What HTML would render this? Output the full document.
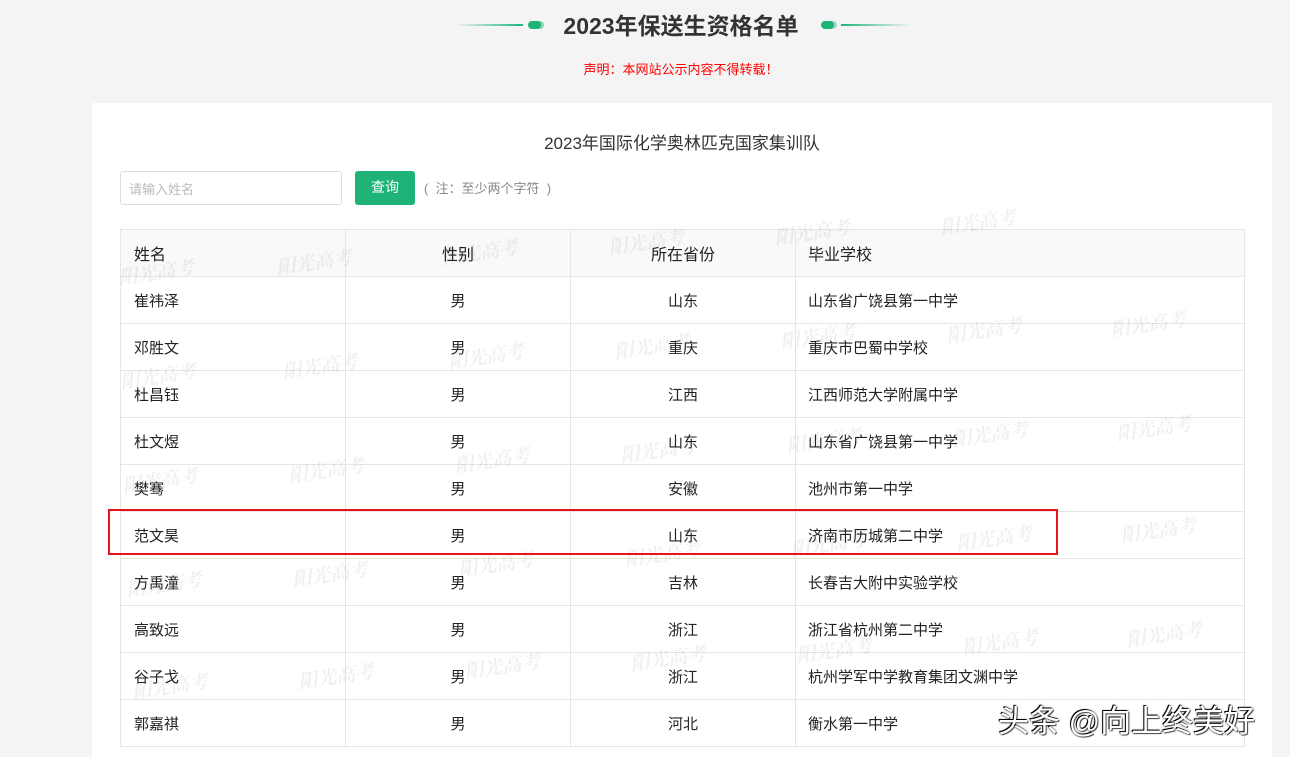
<!DOCTYPE html>
<html><head><meta charset="utf-8"><style>
*{margin:0;padding:0;box-sizing:border-box}
html,body{width:1290px;height:757px;overflow:hidden}
body{background:#f4f4f4;font-family:"Liberation Sans","Noto Sans CJK SC",sans-serif;position:relative;color:#222}
.abs{position:absolute}
.panel{position:absolute;left:92px;top:103px;width:1180px;height:654px;background:#fff}
table{position:absolute;left:120px;top:229px;border-collapse:collapse;font-size:15px;table-layout:fixed}
td,th{border:1px solid #e6e6e6;height:47px;font-weight:normal;color:#222}
th{background:#f9f9f9;font-size:16px}
td:first-child,th:first-child{text-align:left;padding-left:13px}
td:nth-child(2),td:nth-child(3),th:nth-child(2),th:nth-child(3){text-align:center}
td:nth-child(4),th:nth-child(4){text-align:left;padding-left:12px}
.wm{position:absolute;font-family:"Noto Serif CJK SC",serif;font-style:italic;font-weight:bold;font-size:19px;color:rgba(0,0,0,0.06);transform:rotate(-8deg)}
</style></head><body>
<div class="abs" style="left:455px;top:24px;width:68px;height:2px;background:linear-gradient(90deg,rgba(30,180,120,0),#1eb478)"></div>
<div class="abs" style="left:528px;top:21px;width:13px;height:8px;border-radius:4px;background:#1eb478;box-shadow:3px 0 0 rgba(30,180,120,.5)"></div>
<div class="abs" style="left:821px;top:21px;width:13px;height:8px;border-radius:4px;background:#1eb478;box-shadow:3px 0 0 rgba(30,180,120,.4)"></div>
<div class="abs" style="left:841px;top:24px;width:70px;height:2px;background:linear-gradient(90deg,#1eb478,rgba(30,180,120,0))"></div>
<div class="abs" style="left:0;width:1362px;top:10px;text-align:center;font-size:23px;font-weight:bold;color:#333;line-height:32px">2023年保送生资格名单</div>
<div class="abs" style="left:0;width:1362px;top:59px;text-align:center;font-size:13px;color:#f00">声明：本网站公示内容不得转载！</div>
<div class="panel"></div>
<div class="abs" style="left:92px;width:1180px;top:129px;text-align:center;font-size:17px;color:#333">2023年国际化学奥林匹克国家集训队</div>
<div class="abs" style="left:120px;top:171px;width:222px;height:34px;border:1px solid #ddd;border-radius:3px;font-size:13px;color:#bbb;padding:7px 0 0 8px">请输入姓名</div>
<div class="abs" style="left:355px;top:171px;width:60px;height:34px;background:#1eb478;border-radius:3px;color:#fff;font-size:14px;text-align:center;line-height:33px">查询</div>
<div class="abs" style="left:424px;top:178px;font-size:13px;color:#888">( &nbsp;注：至少两个字符 &nbsp;)</div>
<table>
<colgroup><col style="width:225px"><col style="width:225px"><col style="width:225px"><col style="width:449px"></colgroup>
<tr><th>姓名</th><th>性别</th><th>所在省份</th><th>毕业学校</th></tr>
<tr><td>崔祎泽</td><td>男</td><td>山东</td><td>山东省广饶县第一中学</td></tr>
<tr><td>邓胜文</td><td>男</td><td>重庆</td><td>重庆市巴蜀中学校</td></tr>
<tr><td>杜昌钰</td><td>男</td><td>江西</td><td>江西师范大学附属中学</td></tr>
<tr><td>杜文煜</td><td>男</td><td>山东</td><td>山东省广饶县第一中学</td></tr>
<tr><td>樊骞</td><td>男</td><td>安徽</td><td>池州市第一中学</td></tr>
<tr><td>范文昊</td><td>男</td><td>山东</td><td>济南市历城第二中学</td></tr>
<tr><td>方禹潼</td><td>男</td><td>吉林</td><td>长春吉大附中实验学校</td></tr>
<tr><td>高致远</td><td>男</td><td>浙江</td><td>浙江省杭州第二中学</td></tr>
<tr><td>谷子戈</td><td>男</td><td>浙江</td><td>杭州学军中学教育集团文渊中学</td></tr>
<tr><td>郭嘉祺</td><td>男</td><td>河北</td><td>衡水第一中学</td></tr>
</table>
<div class="wm" style="left:118px;top:258px">阳光高考</div>
<div class="wm" style="left:276px;top:248px">阳光高考</div>
<div class="wm" style="left:442px;top:238px">阳光高考</div>
<div class="wm" style="left:608px;top:228px">阳光高考</div>
<div class="wm" style="left:774px;top:218px">阳光高考</div>
<div class="wm" style="left:940px;top:208px">阳光高考</div>
<div class="wm" style="left:120px;top:362px">阳光高考</div>
<div class="wm" style="left:282px;top:352px">阳光高考</div>
<div class="wm" style="left:448px;top:342px">阳光高考</div>
<div class="wm" style="left:614px;top:332px">阳光高考</div>
<div class="wm" style="left:780px;top:322px">阳光高考</div>
<div class="wm" style="left:946px;top:316px">阳光高考</div>
<div class="wm" style="left:1110px;top:310px">阳光高考</div>
<div class="wm" style="left:122px;top:466px">阳光高考</div>
<div class="wm" style="left:288px;top:456px">阳光高考</div>
<div class="wm" style="left:454px;top:446px">阳光高考</div>
<div class="wm" style="left:620px;top:436px">阳光高考</div>
<div class="wm" style="left:786px;top:426px">阳光高考</div>
<div class="wm" style="left:952px;top:420px">阳光高考</div>
<div class="wm" style="left:1116px;top:414px">阳光高考</div>
<div class="wm" style="left:126px;top:570px">阳光高考</div>
<div class="wm" style="left:292px;top:560px">阳光高考</div>
<div class="wm" style="left:458px;top:550px">阳光高考</div>
<div class="wm" style="left:624px;top:540px">阳光高考</div>
<div class="wm" style="left:790px;top:530px">阳光高考</div>
<div class="wm" style="left:956px;top:524px">阳光高考</div>
<div class="wm" style="left:1120px;top:516px">阳光高考</div>
<div class="wm" style="left:132px;top:672px">阳光高考</div>
<div class="wm" style="left:298px;top:662px">阳光高考</div>
<div class="wm" style="left:464px;top:652px">阳光高考</div>
<div class="wm" style="left:630px;top:644px">阳光高考</div>
<div class="wm" style="left:796px;top:636px">阳光高考</div>
<div class="wm" style="left:962px;top:628px">阳光高考</div>
<div class="wm" style="left:1126px;top:620px">阳光高考</div>
<div class="abs" style="left:108px;top:509px;width:950px;height:46px;border:2px solid #e8141c"></div>
<div class="abs" style="left:998px;top:696px;font-size:31px;color:#fff;text-shadow:-1px -1px 0 #000,1px 1px 0 #555,0 0 2px #000">头条 @向上终美好</div>
</body></html>
